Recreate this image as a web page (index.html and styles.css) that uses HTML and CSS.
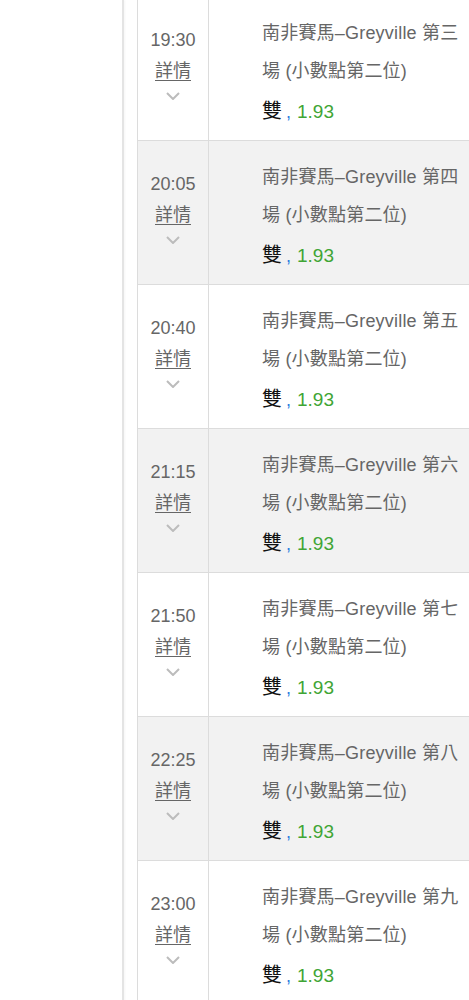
FILE: index.html
```html
<!DOCTYPE html>
<html lang="zh-Hant">
<head>
    <meta charset="UTF-8">
    <meta name="viewport" content="width=device-width, initial-scale=1.0">
    <title>賽事列表</title>
    <link rel="stylesheet" href="styles.css">
</head>
<body>
    <div class="page">
        <aside class="sidebar"></aside>

        <main class="content">
            <div class="race-list">
                <div class="race-row">
                    <div class="race-time">
                        <span class="time">19:30</span>
                        <a class="detail" href="#">詳情</a>
                        <svg class="chevron" width="14" height="8" viewBox="0 0 14 8"><polyline points="1,1 7,7 13,1"/></svg>
                    </div>
                    <div class="race-info">
                        <p class="race-name">南非賽馬–Greyville 第三場 (小數點第二位)</p>
                        <p class="race-bet"><span class="pick">雙</span><span class="comma">,</span><span class="odds">1.93</span></p>
                    </div>
                </div>

                <div class="race-row alt">
                    <div class="race-time">
                        <span class="time">20:05</span>
                        <a class="detail" href="#">詳情</a>
                        <svg class="chevron" width="14" height="8" viewBox="0 0 14 8"><polyline points="1,1 7,7 13,1"/></svg>
                    </div>
                    <div class="race-info">
                        <p class="race-name">南非賽馬–Greyville 第四場 (小數點第二位)</p>
                        <p class="race-bet"><span class="pick">雙</span><span class="comma">,</span><span class="odds">1.93</span></p>
                    </div>
                </div>

                <div class="race-row">
                    <div class="race-time">
                        <span class="time">20:40</span>
                        <a class="detail" href="#">詳情</a>
                        <svg class="chevron" width="14" height="8" viewBox="0 0 14 8"><polyline points="1,1 7,7 13,1"/></svg>
                    </div>
                    <div class="race-info">
                        <p class="race-name">南非賽馬–Greyville 第五場 (小數點第二位)</p>
                        <p class="race-bet"><span class="pick">雙</span><span class="comma">,</span><span class="odds">1.93</span></p>
                    </div>
                </div>

                <div class="race-row alt">
                    <div class="race-time">
                        <span class="time">21:15</span>
                        <a class="detail" href="#">詳情</a>
                        <svg class="chevron" width="14" height="8" viewBox="0 0 14 8"><polyline points="1,1 7,7 13,1"/></svg>
                    </div>
                    <div class="race-info">
                        <p class="race-name">南非賽馬–Greyville 第六場 (小數點第二位)</p>
                        <p class="race-bet"><span class="pick">雙</span><span class="comma">,</span><span class="odds">1.93</span></p>
                    </div>
                </div>

                <div class="race-row">
                    <div class="race-time">
                        <span class="time">21:50</span>
                        <a class="detail" href="#">詳情</a>
                        <svg class="chevron" width="14" height="8" viewBox="0 0 14 8"><polyline points="1,1 7,7 13,1"/></svg>
                    </div>
                    <div class="race-info">
                        <p class="race-name">南非賽馬–Greyville 第七場 (小數點第二位)</p>
                        <p class="race-bet"><span class="pick">雙</span><span class="comma">,</span><span class="odds">1.93</span></p>
                    </div>
                </div>

                <div class="race-row alt">
                    <div class="race-time">
                        <span class="time">22:25</span>
                        <a class="detail" href="#">詳情</a>
                        <svg class="chevron" width="14" height="8" viewBox="0 0 14 8"><polyline points="1,1 7,7 13,1"/></svg>
                    </div>
                    <div class="race-info">
                        <p class="race-name">南非賽馬–Greyville 第八場 (小數點第二位)</p>
                        <p class="race-bet"><span class="pick">雙</span><span class="comma">,</span><span class="odds">1.93</span></p>
                    </div>
                </div>

                <div class="race-row">
                    <div class="race-time">
                        <span class="time">23:00</span>
                        <a class="detail" href="#">詳情</a>
                        <svg class="chevron" width="14" height="8" viewBox="0 0 14 8"><polyline points="1,1 7,7 13,1"/></svg>
                    </div>
                    <div class="race-info">
                        <p class="race-name">南非賽馬–Greyville 第九場 (小數點第二位)</p>
                        <p class="race-bet"><span class="pick">雙</span><span class="comma">,</span><span class="odds">1.93</span></p>
                    </div>
                </div>
            </div>
        </main>
    </div>
</body>
</html>
```

FILE: styles.css
```css
html,
body {
    margin: 0;
    padding: 0;
}

body {
    font: 18px "Liberation Sans", "Noto Sans CJK TC", sans-serif;
    background: #fff;
    color: #666;
    overflow: hidden;
    -webkit-font-smoothing: antialiased;
}

.page {
    display: flex;
    min-height: 1000px;
}

/* left panel, only its edge shows */
.sidebar {
    flex: 0 0 122px;
    border-right: 2px solid #e4e4e4;
    box-shadow: 1px 0 2px rgba(0, 0, 0, 0.04);
}

.content {
    flex: 1;
    padding-left: 13px;
    min-width: 0;
}

.race-list {
    margin-top: -3px;
    width: 420px;
    border-left: 1px solid #dcdcdc;
}

.race-row {
    display: flex;
    height: 143px;
    border-bottom: 1px solid #dcdcdc;
    background: #fff;
}

.race-row.alt {
    background: #f2f2f2;
}

.race-time {
    flex: 0 0 71px;
    border-right: 1px solid #dcdcdc;
    display: flex;
    flex-direction: column;
    align-items: center;
    padding-top: 27px;
    box-sizing: border-box;
}

.time {
    line-height: 32px;
}

.detail {
    line-height: 30px;
    color: #666;
    text-decoration: underline;
    text-underline-offset: 3px;
}

.chevron {
    margin-top: 6px;
    fill: none;
    stroke: #bcbcbc;
    stroke-width: 2;
}

.race-info {
    padding: 17px 0 0 53px;
}

.race-info p {
    margin: 0;
    line-height: 38px;
}

.race-name {
    width: 206px;
    letter-spacing: 0.2px;
}

.race-bet {
    margin-top: 2px !important;
}

.pick {
    font-size: 20px;
    color: #111;
}

.comma {
    margin: 0 6px 0 4px;
    color: #2b7de0;
}

.odds {
    font-size: 19px;
    color: #3fa535;
}
```
